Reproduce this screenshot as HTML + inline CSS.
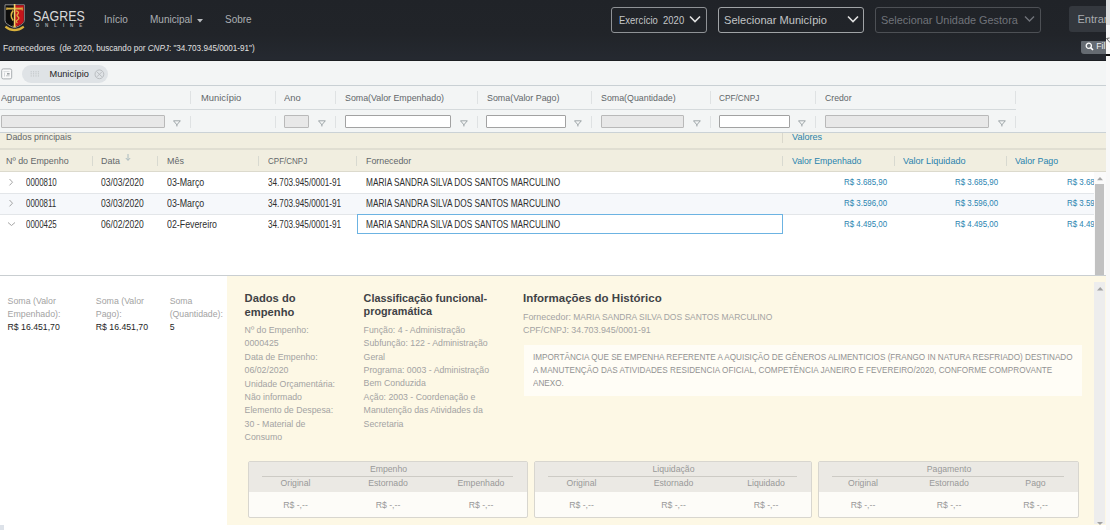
<!DOCTYPE html>
<html><head><meta charset="utf-8">
<style>
*{box-sizing:border-box;margin:0;padding:0}
html,body{width:1110px;height:530px;overflow:hidden;background:#fff;font-family:"Liberation Sans",sans-serif}
.a{position:absolute;white-space:nowrap}
#hdr{position:absolute;left:0;top:0;width:1106px;height:61px;background:linear-gradient(#202328 0px,#212429 34px,#252930 58px);border-bottom:1px solid #1b1e22}
.nav{color:#abafb3;font-size:10px}
.sel{position:absolute;border:1px solid #8a8d91;border-radius:3px;height:26px;top:7px}
.sel span{position:absolute;top:6px;left:7px;color:#d0d2d4;font-size:11px;white-space:nowrap}
.chev{position:absolute;top:7px}
.gh{font-size:9.8px;color:#62676a;transform-origin:0 0}
.vl{position:absolute;width:1px;background:#dfe2e3}
.inp{position:absolute;height:13.5px;top:114.8px;border:1.2px solid #a2a2a2;border-radius:1px;background:#fff}
.inp.d{background:#e8e8e8;border-color:#b9b9b9}
.fi{position:absolute;top:119.6px}
.row{position:absolute;left:0;width:1094px;height:21px}
.dt{font-size:10.2px;color:#2e2e2e;transform-origin:0 0}
.val{font-size:9.2px;color:#2a84b0;transform:scaleX(0.86);transform-origin:0 0}
.lbl{font-size:8.75px;color:#a3a3a3;line-height:13.4px}
.ttl{font-size:11px;font-weight:bold;color:#404246;line-height:14px}
.box{position:absolute;top:461px;height:57px;border:1px solid #d8d6cf;border-radius:2px;background:#fdfcf8}
.boxh{position:absolute;left:0;top:0;right:0;height:30px;background:#ebe9e4}
.bt{position:absolute;font-size:8.7px;color:#999;white-space:nowrap;transform:translateX(-50%)}
.bl{position:absolute;top:14px;height:1px;background:#cdcbc5}
</style></head><body>
<div id="hdr">
  <svg class="a" style="left:0;top:0" width="36" height="36" viewBox="0 0 36 36">
    <path d="M5 4.8H24.3V20.5Q24.3 24.3 14.6 27.8Q5 24.3 5 20.5Z" fill="#0d0d0d" stroke="#9a9a9a" stroke-width="0.9"/>
    <path d="M14.6 5.3H23.8V20.5Q23.8 24 14.6 27.2Z" fill="#c5151c"/>
    <path d="M6.8 8.6H22.4" stroke="#d9b345" stroke-width="1.9"/>
    <path d="M6.8 7.5V10M22.3 7.5V10.5" stroke="#c9a03a" stroke-width="1.2"/>
    <path d="M14.6 4V27" stroke="#f2d46a" stroke-width="1.6"/>
    <path d="M13.2 10.5Q9.2 15.5 13.2 20.5" stroke="#d9b345" stroke-width="1.6" fill="none"/>
    <path d="M15.8 10.8Q19.5 11.5 18 13.8Q16 15.5 18.2 17Q20 18.5 16.8 20.5Q15.5 21.5 17.5 23" stroke="#d9b345" stroke-width="1.3" fill="none"/>
    <path d="M13 25.5L14.6 27.5L16.2 25.5" stroke="#d9b345" stroke-width="1" fill="none"/>
    <path d="M5.4 26.6Q14.5 33.8 23.8 26.6" stroke="#d9b13b" stroke-width="2.1" fill="none"/>
  </svg>
  <div class="a" style="left:32.6px;top:9px;color:#d8d9da;font-size:13.8px;transform:scaleX(0.9);transform-origin:0 0">SAGRES</div>
  <div class="a" style="left:35.7px;top:23.2px;color:#a3a5a8;font-size:4.5px;letter-spacing:5.9px;font-weight:bold">ONLINE</div>
  <div class="a nav" style="left:104px;top:13.5px">Início</div>
  <div class="a nav" style="left:150px;top:13.5px">Municipal</div>
  <svg class="a" style="left:197px;top:18.5px" width="6" height="4"><path d="M0 0H6L3 3.5Z" fill="#b9bcc0"/></svg>
  <div class="a nav" style="left:225px;top:13.5px">Sobre</div>

  <div class="sel" style="left:611px;width:96px;border-color:#8f9296"><span style="font-size:10.5px;top:5.6px;left:7px;color:#c4c6c8;transform:scaleX(0.9);transform-origin:0 0">Exercício&nbsp; 2020</span>
    <svg class="chev" style="left:77px" width="12" height="8"><path d="M1 1.5L6 6.5L11 1.5" stroke="#e0e0e0" stroke-width="1.6" fill="none"/></svg></div>
  <div class="sel" style="left:718px;width:146px;border-color:#a0a3a6"><span style="font-size:11.1px;left:5px;top:6.4px;color:#c2c4c6">Selecionar Município</span>
    <svg class="chev" style="left:128px" width="12" height="8"><path d="M1 1.5L6 6.5L11 1.5" stroke="#e0e0e0" stroke-width="1.6" fill="none"/></svg></div>
  <div class="sel" style="left:875px;width:166px;border-color:#4d5055"><span style="font-size:10.9px;left:5px;color:#70737a">Selecionar Unidade Gestora</span>
    <svg class="chev" style="left:148px" width="11" height="8"><path d="M1 1.5L5.5 6L10 1.5" stroke="#70737a" stroke-width="1.4" fill="none"/></svg></div>
  <div class="a" style="left:1069px;top:5.5px;width:45px;height:26px;background:#34383e;border-radius:3px"></div>
  <div class="a" style="left:1077.5px;top:12.6px;color:#a9acb0;font-size:11px">Entrar</div>

  <div class="a" style="left:3px;top:42.8px;color:#e0e0e0;font-size:8.15px"><span style="font-size:8.45px">Fornecedores</span> &nbsp;(de 2020, buscando por <i>CNPJ</i>: "34.703.945/0001-91")</div>
  <div class="a" style="left:1081px;top:40.5px;width:30px;height:13.5px;background:#656b72;border-radius:1px 0 0 3px"></div>
  <svg class="a" style="left:1085.3px;top:41.6px" width="9" height="9"><circle cx="3.8" cy="3.8" r="2.6" stroke="#fff" stroke-width="1.3" fill="none"/><path d="M5.6 5.6L8 8" stroke="#fff" stroke-width="1.6"/></svg>
  <div class="a" style="left:1096.3px;top:41.2px;color:#eef0f2;font-size:8.6px">Fil</div>
</div>

<!-- toolbar -->
<div class="a" style="left:0;top:61px;width:1106px;height:25px;background:#f3f5f5;border-bottom:1px solid #c9d0d4"></div>
<svg class="a" style="left:0;top:64px" width="16" height="18"><rect x="1.7" y="4.9" width="10" height="10" rx="1.6" fill="#fafafa" stroke="#a8adb0" stroke-width="1"/><rect x="3.5" y="7.2" width="6" height="0.9" fill="#d4d7d9"/><rect x="4" y="8.6" width="1" height="4" fill="#d4d7d9"/><rect x="7" y="9" width="2.6" height="1.6" fill="#9da2a5"/><rect x="6" y="11.3" width="3.6" height="1" fill="#c2c6c8"/></svg>
<div class="a" style="left:22px;top:65px;width:86px;height:18px;background:#dfe3e6;border-radius:9px"></div>
<svg class="a" style="left:30px;top:70px" width="10" height="8"><g stroke="#c3c7ca" stroke-width="0.9" stroke-dasharray="1.2 0.6"><path d="M1.2 1V7M3.6 1V7M6 1V7M8.4 1V7"/></g></svg>
<div class="a" style="left:49.5px;top:69.3px;font-size:9.2px;color:#1e1e1e">Município</div>
<svg class="a" style="left:94px;top:68.5px" width="11" height="11"><circle cx="5.4" cy="5.3" r="4.4" stroke="#b5b9bc" stroke-width="0.9" fill="none"/><path d="M2.9 2.8L7.9 7.8M7.9 2.8L2.9 7.8" stroke="#b5b9bc" stroke-width="0.9"/></svg>

<!-- agrupamentos + filter rows -->
<div class="a" style="left:0;top:86px;width:1106px;height:46px;background:#f3f5f5"></div>
<div class="a" style="left:0;top:109px;width:1016px;height:1px;background:#d5dadc"></div>
<div class="a" style="left:0;top:132px;width:1106px;height:1px;background:#cbd2d6"></div>
<div class="a gh" style="left:1px;top:91.9px;transform:scaleX(0.93)">Agrupamentos</div>
<div class="a gh" style="left:200.5px;top:91.9px;transform:scaleX(0.959)">Município</div>
<div class="a gh" style="left:284.3px;top:91.9px;transform:scaleX(0.959)">Ano</div>
<div class="a gh" style="left:345px;top:91.9px;transform:scaleX(0.902)">Soma(Valor Empenhado)</div>
<div class="a gh" style="left:486.5px;top:91.9px;transform:scaleX(0.907)">Soma(Valor Pago)</div>
<div class="a gh" style="left:601.4px;top:91.9px;transform:scaleX(0.902)">Soma(Quantidade)</div>
<div class="a gh" style="left:719.3px;top:91.9px;transform:scaleX(0.844)">CPF/CNPJ</div>
<div class="a gh" style="left:825px;top:91.9px;transform:scaleX(0.887)">Credor</div>
<!-- dividers row1 -->
<div class="vl" style="left:190px;top:91px;height:13px"></div>
<div class="vl" style="left:275px;top:91px;height:13px"></div>
<div class="vl" style="left:335px;top:91px;height:13px"></div>
<div class="vl" style="left:477px;top:91px;height:13px"></div>
<div class="vl" style="left:591px;top:91px;height:13px"></div>
<div class="vl" style="left:710px;top:91px;height:13px"></div>
<div class="vl" style="left:815px;top:91px;height:13px"></div>
<div class="vl" style="left:1015px;top:91px;height:13px"></div>
<!-- dividers row2 -->
<div class="vl" style="left:190px;top:116px;height:12px"></div>
<div class="vl" style="left:275px;top:116px;height:12px"></div>
<div class="vl" style="left:335px;top:116px;height:12px"></div>
<div class="vl" style="left:477px;top:116px;height:12px"></div>
<div class="vl" style="left:591px;top:116px;height:12px"></div>
<div class="vl" style="left:710px;top:116px;height:12px"></div>
<div class="vl" style="left:815px;top:116px;height:12px"></div>
<div class="vl" style="left:1015px;top:116px;height:12px"></div>
<!-- inputs -->
<div class="inp d" style="left:1px;width:164px"></div>
<div class="inp d" style="left:284px;width:25px"></div>
<div class="inp" style="left:345px;width:106px"></div>
<div class="inp" style="left:486px;width:80px"></div>
<div class="inp d" style="left:601px;width:83px"></div>
<div class="inp" style="left:719px;width:71px"></div>
<div class="inp d" style="left:825px;width:164px"></div>
<svg class="fi" style="left:172.6px" width="8" height="7"><path d="M0.5 0.8H7.3L3.9 4.8Z" stroke="#8f979b" stroke-width="0.85" fill="none"/><path d="M3.9 4.6V6.4" stroke="#8f979b" stroke-width="1"/></svg>
<svg class="fi" style="left:317.6px" width="8" height="7"><path d="M0.5 0.8H7.3L3.9 4.8Z" stroke="#8f979b" stroke-width="0.85" fill="none"/><path d="M3.9 4.6V6.4" stroke="#8f979b" stroke-width="1"/></svg>
<svg class="fi" style="left:459.6px" width="8" height="7"><path d="M0.5 0.8H7.3L3.9 4.8Z" stroke="#8f979b" stroke-width="0.85" fill="none"/><path d="M3.9 4.6V6.4" stroke="#8f979b" stroke-width="1"/></svg>
<svg class="fi" style="left:573.6px" width="8" height="7"><path d="M0.5 0.8H7.3L3.9 4.8Z" stroke="#8f979b" stroke-width="0.85" fill="none"/><path d="M3.9 4.6V6.4" stroke="#8f979b" stroke-width="1"/></svg>
<svg class="fi" style="left:692.6px" width="8" height="7"><path d="M0.5 0.8H7.3L3.9 4.8Z" stroke="#8f979b" stroke-width="0.85" fill="none"/><path d="M3.9 4.6V6.4" stroke="#8f979b" stroke-width="1"/></svg>
<svg class="fi" style="left:797.6px" width="8" height="7"><path d="M0.5 0.8H7.3L3.9 4.8Z" stroke="#8f979b" stroke-width="0.85" fill="none"/><path d="M3.9 4.6V6.4" stroke="#8f979b" stroke-width="1"/></svg>
<svg class="fi" style="left:997.6px" width="8" height="7"><path d="M0.5 0.8H7.3L3.9 4.8Z" stroke="#8f979b" stroke-width="0.85" fill="none"/><path d="M3.9 4.6V6.4" stroke="#8f979b" stroke-width="1"/></svg>

<!-- grid header beige -->
<div class="a" style="left:0;top:133px;width:1106px;height:39px;background:#f1eee0"></div>
<div class="a" style="left:0;top:148px;width:1106px;height:2px;background:#e0ded2"></div>
<div class="a" style="left:0;top:171px;width:1106px;height:1px;background:#dcdacd"></div>
<div class="a gh" style="left:5.7px;top:130.8px;transform:scaleX(0.902)">Dados principais</div>
<div class="a gh" style="left:791.6px;top:130.8px;transform:scaleX(0.926);color:#2983ad">Valores</div>
<div class="vl" style="left:782px;top:133px;height:10px;background:#dad8cc"></div>
<div class="a gh" style="left:5.7px;top:154.9px;transform:scaleX(0.908)">Nº do Empenho</div>
<div class="a gh" style="left:101px;top:154.9px;transform:scaleX(0.911)">Data</div>
<svg class="a" style="left:124.8px;top:153.7px" width="6" height="7"><path d="M3 0V6.2M0.8 4L3 6.4L5.2 4" stroke="#a3b4bb" stroke-width="0.9" fill="none"/></svg>
<div class="a gh" style="left:166.7px;top:154.9px;transform:scaleX(0.911)">Mês</div>
<div class="a gh" style="left:267.7px;top:154.9px;transform:scaleX(0.818)">CPF/CNPJ</div>
<div class="a gh" style="left:365.5px;top:154.9px;transform:scaleX(0.902)">Fornecedor</div>
<div class="a gh" style="left:791.6px;top:154.9px;transform:scaleX(0.893);color:#2983ad">Valor Empenhado</div>
<div class="a gh" style="left:903.2px;top:154.9px;transform:scaleX(0.93);color:#2983ad">Valor Liquidado</div>
<div class="a gh" style="left:1014.7px;top:154.9px;transform:scaleX(0.905);color:#2983ad">Valor Pago</div>
<div class="vl" style="left:91.5px;top:155.5px;height:10.5px;background:#d8d9d0"></div>
<div class="vl" style="left:157px;top:155.5px;height:10.5px;background:#d8d9d0"></div>
<div class="vl" style="left:258px;top:155.5px;height:10.5px;background:#d8d9d0"></div>
<div class="vl" style="left:356px;top:155.5px;height:10.5px;background:#d8d9d0"></div>
<div class="vl" style="left:782px;top:155.5px;height:10.5px;background:#d8d9d0"></div>
<div class="vl" style="left:894px;top:155.5px;height:10.5px;background:#d8d9d0"></div>
<div class="vl" style="left:1005.5px;top:155.5px;height:10.5px;background:#d8d9d0"></div>

<!-- data rows -->
<div class="row" style="top:172px;height:22px;background:#fff;border-bottom:1px solid #e3e6e9"></div>
<div class="row" style="top:194px;background:#f6f8fb;border-bottom:1px solid #e3e6e9"></div>
<div class="row" style="top:215px;background:#fff"></div>
<svg class="a" style="left:8px;top:178px" width="6" height="9"><path d="M1.5 1L4.5 4.2L1.5 7.4" stroke="#9a9a9a" stroke-width="0.9" fill="none"/></svg>
<svg class="a" style="left:8px;top:199px" width="6" height="9"><path d="M1.5 1L4.5 4.2L1.5 7.4" stroke="#9a9a9a" stroke-width="0.9" fill="none"/></svg>
<svg class="a" style="left:7px;top:221px" width="9" height="6"><path d="M1 1.5L4.5 4.5L8 1.5" stroke="#9a9a9a" stroke-width="0.9" fill="none"/></svg>
<div class="a dt" style="left:25.7px;top:176.8px;transform:scaleX(0.775)">0000810</div>
<div class="a dt" style="left:101px;top:176.8px;transform:scaleX(0.839)">03/03/2020</div>
<div class="a dt" style="left:167px;top:176.8px;transform:scaleX(0.866)">03-Março</div>
<div class="a dt" style="left:267.7px;top:176.8px;transform:scaleX(0.802)">34.703.945/0001-91</div>
<div class="a dt" style="left:365.7px;top:176.8px;transform:scaleX(0.811)">MARIA SANDRA SILVA DOS SANTOS MARCULINO</div>
<div class="a dt" style="left:25.7px;top:197.8px;transform:scaleX(0.775)">0000811</div>
<div class="a dt" style="left:101px;top:197.8px;transform:scaleX(0.839)">03/03/2020</div>
<div class="a dt" style="left:167px;top:197.8px;transform:scaleX(0.866)">03-Março</div>
<div class="a dt" style="left:267.7px;top:197.8px;transform:scaleX(0.802)">34.703.945/0001-91</div>
<div class="a dt" style="left:365.7px;top:197.8px;transform:scaleX(0.811)">MARIA SANDRA SILVA DOS SANTOS MARCULINO</div>
<div class="a dt" style="left:25.7px;top:218.8px;transform:scaleX(0.775)">0000425</div>
<div class="a dt" style="left:101px;top:218.8px;transform:scaleX(0.839)">06/02/2020</div>
<div class="a dt" style="left:167px;top:218.8px;transform:scaleX(0.866)">02-Fevereiro</div>
<div class="a dt" style="left:267.7px;top:218.8px;transform:scaleX(0.802)">34.703.945/0001-91</div>
<div class="a" style="left:356.5px;top:214px;width:426px;height:20px;border:1px solid #6cb3e2"></div>
<div class="a dt" style="left:365.7px;top:218.8px;transform:scaleX(0.811)">MARIA SANDRA SILVA DOS SANTOS MARCULINO</div>
<div class="a val" style="left:844px;top:177.0px">R$ 3.685,90</div>
<div class="a val" style="left:954.5px;top:177.0px">R$ 3.685,90</div>
<div class="a val" style="left:844px;top:198.0px">R$ 3.596,00</div>
<div class="a val" style="left:954.5px;top:198.0px">R$ 3.596,00</div>
<div class="a val" style="left:844px;top:219.0px">R$ 4.495,00</div>
<div class="a val" style="left:954.5px;top:219.0px">R$ 4.495,00</div>
<div class="a" style="left:1066px;top:172px;width:27.6px;height:63px;overflow:hidden">
  <div class="a val" style="left:0.5px;top:5px">R$ 3.685,90</div>
  <div class="a val" style="left:0.5px;top:26px">R$ 3.596,00</div>
  <div class="a val" style="left:0.5px;top:47px">R$ 4.495,00</div>
</div>
<!-- grid scrollbar -->
<div class="a" style="left:1094px;top:172px;width:12px;height:103px;background:#fafafa"></div>
<svg class="a" style="left:1096.8px;top:177.4px" width="7" height="4"><path d="M0 3.2H6L3 0Z" fill="#a8a8a8"/></svg>
<div class="a" style="left:1095px;top:184px;width:9px;height:91px;background:#c1c1c1"></div>
<div class="a" style="left:0;top:275px;width:1106px;height:1px;background:#c9ced1"></div>

<!-- detail left -->
<div class="a lbl" style="left:7.6px;top:295px;font-size:8.8px;line-height:13px">Soma (Valor<br>Empenhado):</div>
<div class="a" style="left:7.6px;top:322px;font-size:8.7px;color:#1e1e1e">R$ 16.451,70</div>
<div class="a lbl" style="left:95.8px;top:295px;font-size:8.8px;line-height:13px">Soma (Valor<br>Pago):</div>
<div class="a" style="left:95.8px;top:322px;font-size:8.7px;color:#1e1e1e">R$ 16.451,70</div>
<div class="a lbl" style="left:169.7px;top:295px;font-size:8.7px;line-height:13px">Soma<br>(Quantidade):</div>
<div class="a" style="left:169.7px;top:322px;font-size:8.7px;color:#1e1e1e">5</div>

<!-- detail panel -->
<div class="a" style="left:226.5px;top:276px;width:879.5px;height:249px;background:#fdf8e5"></div>
<div class="a ttl" style="left:244.6px;top:290.8px;font-size:11.2px">Dados do<br>empenho</div>
<div class="a lbl" style="left:244.6px;top:324px">Nº do Empenho:<br>0000425<br>Data de Empenho:<br>06/02/2020<br>Unidade Orçamentária:<br>Não informado<br>Elemento de Despesa:<br>30 - Material de<br>Consumo</div>
<div class="a ttl" style="left:363.6px;top:291.8px;font-size:10.8px;line-height:13px">Classificação funcional-<br>programática</div>
<div class="a lbl" style="left:363.6px;top:323.8px">Função: 4 - Administração<br>Subfunção: 122 - Administração<br>Geral<br>Programa: 0003 - Administração<br>Bem Conduzida<br>Ação: 2003 - Coordenação e<br>Manutenção das Atividades da<br>Secretaria</div>
<div class="a ttl" style="left:523px;top:290.5px;font-size:11.5px">Informações do Histórico</div>
<div class="a lbl" style="left:523px;top:311px;font-size:8.47px"><span style="font-size:8.9px">Fornecedor:</span> MARIA SANDRA SILVA DOS SANTOS MARCULINO</div>
<div class="a lbl" style="left:523px;top:323.5px;font-size:8.9px">CPF/CNPJ: 34.703.945/0001-91</div>
<div class="a" style="left:524px;top:345px;width:558px;height:51px;background:#fffdf6"></div>
<div class="a lbl" style="left:532.7px;top:350.6px;font-size:9.3px;line-height:13.1px;color:#929292;transform:scaleX(0.876);transform-origin:0 0">IMPORTÂNCIA QUE SE EMPENHA REFERENTE A AQUISIÇÃO DE GÊNEROS ALIMENTICIOS (FRANGO IN NATURA RESFRIADO) DESTINADO<br><span style="letter-spacing:0.04px">A MANUTENÇÃO DAS ATIVIDADES RESIDENCIA OFICIAL, COMPETÊNCIA JANEIRO E FEVEREIRO/2020, CONFORME COMPROVANTE</span><br>ANEXO.</div>

<!-- bottom boxes -->
<div class="box" style="left:248px;width:280px">
  <div class="boxh"></div>
  <div class="bl" style="left:13px;right:14px"></div>
  <div class="bt" style="left:139.5px;top:2.2px">Empenho</div>
  <div class="bt" style="left:46.5px;top:16.3px">Original</div>
  <div class="bt" style="left:139px;top:16.3px">Estornado</div>
  <div class="bt" style="left:232px;top:16.3px">Empenhado</div>
  <div class="bt" style="left:46.5px;top:38px">R$ -,--</div>
  <div class="bt" style="left:139px;top:38px">R$ -,--</div>
  <div class="bt" style="left:232px;top:38px">R$ -,--</div>
</div>
<div class="box" style="left:534px;width:278px">
  <div class="boxh"></div>
  <div class="bl" style="left:13px;right:14px"></div>
  <div class="bt" style="left:138.5px;top:2.2px">Liquidação</div>
  <div class="bt" style="left:46.5px;top:16.3px">Original</div>
  <div class="bt" style="left:138.5px;top:16.3px">Estornado</div>
  <div class="bt" style="left:231px;top:16.3px">Liquidado</div>
  <div class="bt" style="left:46.5px;top:38px">R$ -,--</div>
  <div class="bt" style="left:138.5px;top:38px">R$ -,--</div>
  <div class="bt" style="left:231px;top:38px">R$ -,--</div>
</div>
<div class="box" style="left:818px;width:261px">
  <div class="boxh"></div>
  <div class="bl" style="left:13px;right:14px"></div>
  <div class="bt" style="left:130px;top:2.2px">Pagamento</div>
  <div class="bt" style="left:44px;top:16.3px">Original</div>
  <div class="bt" style="left:130px;top:16.3px">Estornado</div>
  <div class="bt" style="left:216.5px;top:16.3px">Pago</div>
  <div class="bt" style="left:44px;top:38px">R$ -,--</div>
  <div class="bt" style="left:130px;top:38px">R$ -,--</div>
  <div class="bt" style="left:216.5px;top:38px">R$ -,--</div>
</div>

<!-- detail scrollbar -->
<div class="a" style="left:1094px;top:282px;width:11.3px;height:242px;background:#ededed"></div>
<svg class="a" style="left:1096.7px;top:286.5px" width="7" height="4"><path d="M0 3.5H6.4L3.2 0Z" fill="#a3a3a3"/></svg>
<svg class="a" style="left:1096.5px;top:521.5px" width="7" height="4"><path d="M0 0H6L3 3Z" fill="#a3a3a3"/></svg>

<div class="a" style="left:0;top:525px;width:4px;height:5px;background:#dde2e9"></div>
<!-- right strip -->
<div class="a" style="left:1106px;top:0;width:4px;height:530px;background:#f8f8f8"></div>
<div class="a" style="left:1106px;top:0;width:4px;height:25px;background:#dedfe0"></div>
<svg class="a" style="left:1106px;top:37.3px" width="4" height="8"><path d="M0.5 1.5L4 5.5M0.5 1.5L3.5 1" stroke="#6a6a6a" stroke-width="1"/></svg>
<div class="a" style="left:1106px;top:54px;width:4px;height:1.5px;background:#111"></div>
</body></html>
